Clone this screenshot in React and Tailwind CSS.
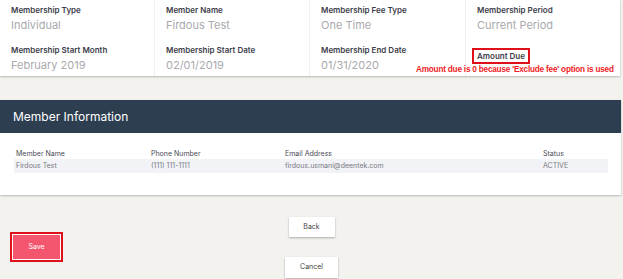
export default function App() {
  const cols = [
    [["Membership Type", "Individual"], ["Membership Start Month", "February 2019"]],
    [["Member Name", "Firdous Test"], ["Membership Start Date", "02/01/2019"]],
    [["Membership Fee Type", "One Time"], ["Membership End Date", "01/31/2020"]],
    [["Membership Period", "Current Period"], null],
  ];
  return (
    <div className="w-[623px] h-[279px] bg-[#f3f2ef] overflow-hidden relative font-['Inter',sans-serif]">
      <div className="w-[620px] h-[76px] bg-white shadow-[0_1px_2px_rgba(0,0,0,0.25)] grid grid-cols-[155px_155px_156px_154px]">
        {cols.map((c, i) => (
          <div key={i} className={`pl-[11px] pt-[5px] ${i < 3 ? "border-r border-[#f0f0f0]" : ""}`}>
            <div className="text-[8px] font-semibold text-[#3d3d4a] leading-[10px]">{c[0][0]}</div>
            <div className="text-[11px] text-[#a9a9ae] leading-[14px] mt-[3px]">{c[0][1]}</div>
            {c[1] ? (
              <>
                <div className="text-[8px] font-semibold text-[#3d3d4a] leading-[10px] mt-[13px]">{c[1][0]}</div>
                <div className="text-[11px] text-[#a9a9ae] leading-[14px] mt-[3px]">{c[1][1]}</div>
              </>
            ) : (
              <div className="mt-[9px] -ml-[5px]">
                <div className="inline-flex items-center h-[16px] px-[3px] border-2 border-[#e0101a]">
                  <span className="text-[8px] font-semibold text-[#3d3d4a] leading-[10px]">Amount Due</span>
                </div>
              </div>
            )}
          </div>
        ))}
      </div>
      <div className="absolute left-[416px] top-[64px] text-[8.2px] font-bold text-[#ee1c25] whitespace-nowrap font-['Liberation_Sans',sans-serif] tracking-[-0.2px]">
        Amount due is 0 because 'Exclude fee' option is used
      </div>

      <div className="mt-[24px] w-[621px] h-[95px] bg-white shadow-[0_1px_2px_rgba(0,0,0,0.25)]">
        <div className="h-[33px] bg-[#2d3e50] flex items-center pl-[13px] text-white text-[12px]">Member Information</div>
        <div className="pl-[14px] pr-[13px] pt-[16px]">
          <div className="grid grid-cols-[135px_134px_258px_1fr] text-[7px] text-[#4a4a55] h-[10px] items-center">
            <div className="pl-[2px]">Member Name</div>
            <div className="pl-[2px]">Phone Number</div>
            <div className="pl-[2px]">Email Address</div>
            <div className="pl-[2px]">Status</div>
          </div>
          <div className="grid grid-cols-[135px_134px_258px_1fr] text-[7px] text-[#7a7a85] h-[14px] items-center bg-[#f1f3f6]">
            <div className="pl-[2px]">Firdous Test</div>
            <div className="pl-[2px]">(111) 111-1111</div>
            <div className="pl-[2px]">firdous.usmani@deentek.com</div>
            <div className="pl-[2px]">ACTIVE</div>
          </div>
        </div>
      </div>

      <div className="grid grid-cols-[1fr_auto_1fr] mt-[22px]">
        <div className="pt-[15px] pl-[10px]">
          <div className="w-[53px] h-[30px] border-2 border-[#e0101a] bg-white p-[1px]">
            <div className="w-full h-full bg-[#f5566f] flex items-center justify-center text-white text-[7px]">Save</div>
          </div>
        </div>
        <div className="flex flex-col items-center">
          <div className="w-[46px] h-[20px] bg-white shadow-[0_1px_2px_rgba(0,0,0,0.3)] flex items-center justify-center text-[7px] text-[#444]">Back</div>
          <div className="mt-[20px] w-[53px] h-[21px] bg-white shadow-[0_1px_2px_rgba(0,0,0,0.3)] flex items-center justify-center text-[7px] text-[#444]">Cancel</div>
        </div>
        <div></div>
      </div>
    </div>
  );
}
